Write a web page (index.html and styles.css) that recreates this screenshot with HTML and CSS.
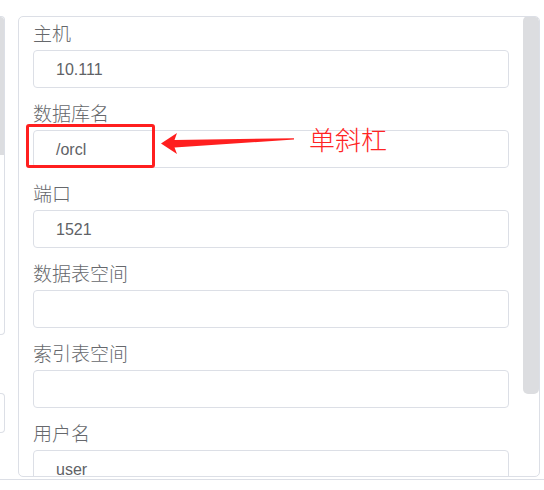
FILE: index.html
```html
<!DOCTYPE html>
<html lang="zh">
<head>
<meta charset="utf-8">
<link rel="stylesheet" href="styles.css">
</head>
<body>
<div class="page">
  <div class="row">
    <div class="left-col">
      <div class="left-panel"><div class="left-thumb"></div></div>
      <div class="left-box"></div>
    </div>
    <div class="panel">
      <div class="form">
        <div class="field first">
          <div class="label">主机</div>
          <div class="input">10.111</div>
        </div>
        <div class="field">
          <div class="label">数据库名</div>
          <div class="input">/orcl</div>
        </div>
        <div class="field">
          <div class="label">端口</div>
          <div class="input">1521</div>
        </div>
        <div class="field">
          <div class="label">数据表空间</div>
          <div class="input"></div>
        </div>
        <div class="field">
          <div class="label">索引表空间</div>
          <div class="input"></div>
        </div>
        <div class="field">
          <div class="label">用户名</div>
          <div class="input">user</div>
        </div>
      </div>
      <div class="track"><div class="thumb"></div></div>
    </div>
  </div>
  <div class="divider"></div>

  <div class="mark-box"></div>
  <svg class="mark-arrow" width="140" height="28" viewBox="0 0 140 28">
    <polygon points="3,15.5 19,5 16.5,12 136,10.2 136,11.6 16.5,19.5 19,26" fill="#ff1f1f"/>
  </svg>
  <div class="mark-text">单斜杠</div>
</div>
</body>
</html>
```

FILE: styles.css
```css
* { box-sizing: border-box; }
html, body { margin: 0; padding: 0; background: #fff; }
body { width: 544px; height: 490px; overflow: hidden; }

.page {
  position: relative;
  width: 544px;
  height: 490px;
  font-family: "Noto Sans CJK SC", "Liberation Sans", sans-serif;
}

.row {
  display: flex;
  padding-top: 16px;
  height: 477px;
}

.left-col {
  width: 5px;
  display: flex;
  flex-direction: column;
}
.left-panel {
  height: 319px;
  border: 1px solid #dcdfe6;
  border-left: none;
  border-radius: 0 4px 4px 0;
  overflow: hidden;
}
.left-thumb {
  width: 4px;
  height: 138px;
  background: #dcdde0;
  border-radius: 0 3px 0 0;
}
.left-box {
  margin-top: 58px;
  height: 40px;
  border: 1px solid #dcdfe6;
  border-left: none;
  border-radius: 0 4px 4px 0;
}

.panel {
  margin-left: 13px;
  width: 522px;
  border: 1px solid #dcdfe6;
  border-radius: 5px;
  display: flex;
  overflow: hidden;
}

.form {
  flex: 1;
  padding: 4px 14px 0 14px;
}

.field { display: flex; flex-direction: column; }
.field + .field { margin-top: 13px; }

.label {
  font-size: 19px;
  font-weight: 300;
  line-height: 24px;
  color: #66686c;
  margin-bottom: 5px;
  white-space: nowrap;
}

.input {
  height: 38px;
  border: 1px solid #dcdfe6;
  border-radius: 4px;
  padding-left: 22px;
  font-family: "Liberation Sans", Arial, sans-serif;
  font-size: 16px;
  line-height: 37px;
  color: #606266;
  flex-shrink: 0;
}

.track {
  width: 16px;
  margin-top: -1px;
  flex-shrink: 0;
}
.thumb {
  height: 378px;
  background: #dcdde0;
  border-radius: 5px;
}

.divider {
  margin-top: 2px;
  height: 1px;
  background: #dcdfe6;
}

/* annotation overlay */
.mark-box {
  position: absolute;
  left: 26px;
  top: 124px;
  width: 129px;
  height: 44px;
  border: 3px solid #ff1f1f;
  border-radius: 3px;
}
.mark-arrow {
  position: absolute;
  left: 158px;
  top: 128px;
}
.mark-text {
  position: absolute;
  left: 309px;
  top: 126px;
  font-size: 26px;
  font-weight: 300;
  line-height: 26px;
  color: #ff2424;
  white-space: nowrap;
}
```
